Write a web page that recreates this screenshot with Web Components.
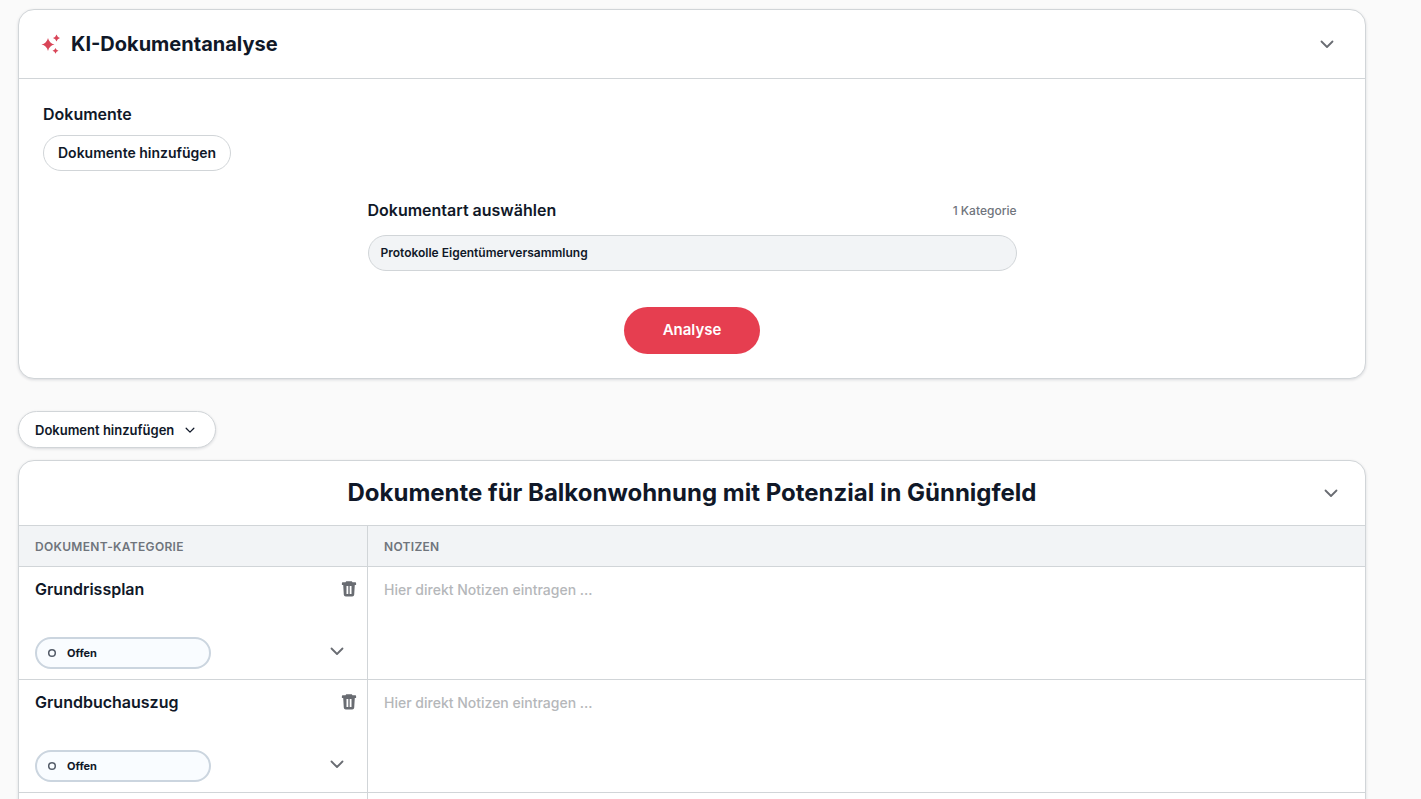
<!DOCTYPE html>
<html lang="de">
<head>
<meta charset="utf-8">
<meta name="viewport" content="width=device-width, initial-scale=1">
<title>Dokumente</title>
<style>
    :root {
        --text-primary: #101828;
        --text-muted: #6f747c;
        --placeholder: #b5b7ba;
        --border-color: #d1d5d8;
        --surface-muted: #f2f4f6;
        --accent-color: #e63e50;
    }
    * { box-sizing: border-box; }
    html, body { height: 100%; }
    body {
        margin: 0;
        overflow: hidden;
        background: #fafafa;
        color: var(--text-primary);
        font-family: Inter, "Liberation Sans", sans-serif;
    }
</style>
</head>
<body>
<documents-page></documents-page>

<script>
// Shared by all elements, shadow roots do not inherit these rules
const baseStyles = `
    *, *::before, *::after { box-sizing: border-box; }
    button { font: inherit; color: inherit; cursor: pointer; margin: 0; }
    h1, h2, h3 { margin: 0; }
`;

const icons = {
    sparkles: { box: '0 0 20 20', body: '<path fill="currentColor" d="M7 4 Q8.200 9.300 13.500 10.500 Q8.200 11.700 7 17 Q5.800 11.700 .5 10.500 Q5.800 9.300 7 4Z"/><path fill="currentColor" d="M15.500 .5 Q16.300 3.200 19 4 Q16.300 4.800 15.500 7.500 Q14.700 4.800 12 4 Q14.700 3.200 15.500 .5Z"/><path fill="currentColor" d="M14.500 14 Q15.100 16.200 17.500 16.800 Q15.100 17.400 14.500 19.800 Q13.900 17.400 11.500 16.800 Q13.900 16.200 14.500 14Z"/>' },
    chevron: { box: '0 0 20 20', body: '<path d="M4.500 7.500 L10 13 L15.500 7.500" fill="none" stroke="currentColor" stroke-width="1.800" stroke-linecap="round" stroke-linejoin="round"/>' },
    trash: { box: '0 0 16 16', body: '<path fill="currentColor" fill-rule="evenodd" d="M5.200 .3h5.600l.7 1H14.300a.8.8 0 0 1 .8.800v1.800h-1.300l-.6 9.800a2 2 0 0 1-2 1.800H4.800a2 2 0 0 1-2-1.800L2.200 3.900H.9V2.100a.8.800 0 0 1 .8-.8h2.800zM5.500 5v8h1.800V5zM8.700 5v8h1.800V5z"/>' },
    circle: { box: '0 0 10 10', body: '<circle cx="5" cy="5" r="3.300" fill="none" stroke="currentColor" stroke-width="1.500"/>' }
};

class UiIcon extends HTMLElement {
    connectedCallback() {
        const icon = icons[this.getAttribute('name')];
        this.attachShadow({ mode: 'open' }).innerHTML = `
            <style>
                :host { display: inline-flex; width: 20px; height: 20px; flex: none; }
                svg { width: 100%; height: 100%; }
            </style>
            <svg viewBox="${icon.box}" aria-hidden="true">${icon.body}</svg>
        `;
    }
}
customElements.define('ui-icon', UiIcon);

// Round-edged button: variants outline, raised and primary
class PillButton extends HTMLElement {
    connectedCallback() {
        this.attachShadow({ mode: 'open' }).innerHTML = `
            <style>
                ${baseStyles}
                :host { display: inline-flex; }
                button {
                    display: inline-flex;
                    align-items: center;
                    justify-content: center;
                    gap: 9px;
                    height: 36px;
                    padding: 0 14px 2px;
                    border: 1px solid var(--border-color);
                    border-radius: 24px;
                    background: #fff;
                    font-size: 14px;
                    font-weight: 600;
                    white-space: nowrap;
                }
                :host([variant="raised"]) button {
                    height: 37px;
                    padding: 0 16px;
                    font-size: 13px;
                    box-shadow: 0 1px 3px rgba(16, 24, 40, 0.14);
                }
                :host([variant="primary"]) button {
                    min-width: 136px;
                    height: 47px;
                    padding: 0 36px 2px;
                    border: 0;
                    background: var(--accent-color);
                    color: #fff;
                    font-size: 15px;
                }
            </style>
            <button type="button"><slot></slot></button>
        `;
    }
}
customElements.define('pill-button', PillButton);

class IconButton extends HTMLElement {
    connectedCallback() {
        this.attachShadow({ mode: 'open' }).innerHTML = `
            <style>
                ${baseStyles}
                :host { display: inline-flex; flex: none; }
                button {
                    display: inline-flex;
                    padding: 0;
                    border: 0;
                    background: none;
                    color: #696c72;
                }
                ui-icon[name="trash"] { width: 16px; height: 16px; }
            </style>
            <button type="button" aria-label="${this.getAttribute('label')}">
                <ui-icon name="${this.getAttribute('icon')}"></ui-icon>
            </button>
        `;
    }
}
customElements.define('icon-button', IconButton);

class PanelCard extends HTMLElement {
    connectedCallback() {
        this.attachShadow({ mode: 'open' }).innerHTML = `
            <style>
                ${baseStyles}
                :host {
                    display: block;
                    overflow: hidden;
                    background: #fff;
                    border: 1px solid var(--border-color);
                    border-radius: 16px;
                    box-shadow: 0 1px 3px rgba(16, 24, 40, 0.14);
                }
                header {
                    display: flex;
                    align-items: center;
                    justify-content: space-between;
                    min-height: 69px;
                    padding: 0 28px 0 22px;
                    border-bottom: 1px solid var(--border-color);
                }
                .title { display: flex; align-items: center; gap: 10px; }
                :host([centered]) header { min-height: 65px; padding: 0 24px; }
                :host([centered]) .title { flex: 1; justify-content: center; padding-left: 20px; }
            </style>
            <header>
                <div class="title"><slot name="title"></slot></div>
                <icon-button icon="chevron" label="Bereich einklappen"></icon-button>
            </header>
            <slot></slot>
        `;
    }
}
customElements.define('panel-card', PanelCard);

class DocumentAnalysis extends HTMLElement {
    connectedCallback() {
        this.attachShadow({ mode: 'open' }).innerHTML = `
            <style>
                ${baseStyles}
                :host { display: block; }
                h2 { font-size: 20px; line-height: 28px; font-weight: 700; }
                h3 { font-size: 16px; line-height: 22px; font-weight: 600; }
                .icon { color: #d94558; }
                .content { padding: 24px; }
                .documents { display: grid; justify-items: start; gap: 10px; }
                .types { max-width: 649px; margin: 28px auto 36px; }
                .types-header {
                    display: flex;
                    align-items: center;
                    justify-content: space-between;
                    margin-bottom: 14px;
                }
                .count { font-size: 12px; font-weight: 500; color: var(--text-muted); }
                .type {
                    display: block;
                    width: 100%;
                    height: 36px;
                    padding: 0 12px 2px;
                    border: 1px solid var(--border-color);
                    border-radius: 18px;
                    background: var(--surface-muted);
                    font-size: 12px;
                    font-weight: 600;
                    text-align: left;
                }
                .actions { display: flex; justify-content: center; }
            </style>
            <panel-card>
                <ui-icon slot="title" class="icon" name="sparkles"></ui-icon>
                <h2 slot="title">KI-Dokumentanalyse</h2>
                <div class="content">
                    <div class="documents">
                        <h3>Dokumente</h3>
                        <pill-button>Dokumente hinzufügen</pill-button>
                    </div>
                    <div class="types">
                        <div class="types-header">
                            <h3>Dokumentart auswählen</h3>
                            <span class="count">1 Kategorie</span>
                        </div>
                        <button class="type" type="button">Protokolle Eigentümerversammlung</button>
                    </div>
                    <div class="actions"><pill-button variant="primary">Analyse</pill-button></div>
                </div>
            </panel-card>
        `;
    }
}
customElements.define('document-analysis', DocumentAnalysis);

// Left cell of a row: name, delete, status and expand
class DocumentCategory extends HTMLElement {
    connectedCallback() {
        this.attachShadow({ mode: 'open' }).innerHTML = `
            <style>
                ${baseStyles}
                :host {
                    display: flex;
                    flex-direction: column;
                    justify-content: space-between;
                    height: 112px;
                    padding: 10px 10px 10px 16px;
                }
                .row { display: flex; align-items: center; justify-content: space-between; }
                h3 { font-size: 16px; line-height: 24px; font-weight: 600; }
                .status {
                    display: flex;
                    align-items: center;
                    gap: 10px;
                    width: 176px;
                    height: 32px;
                    padding: 0 10px;
                    border: 2px solid #cbd5df;
                    border-radius: 16px;
                    background: #f9fcff;
                    font-size: 11px;
                    font-weight: 700;
                }
                .status ui-icon { width: 10px; height: 10px; color: #535b68; }
                .expand { margin: 0 10px 4px 0; }
            </style>
            <div class="row">
                <h3><slot></slot></h3>
                <icon-button icon="trash" label="Löschen"></icon-button>
            </div>
            <div class="row">
                <button class="status" type="button"><ui-icon name="circle"></ui-icon>Offen</button>
                <icon-button class="expand" icon="chevron" label="Details anzeigen"></icon-button>
            </div>
        `;
    }
}
customElements.define('document-category', DocumentCategory);

class DocumentTable extends HTMLElement {
    set documents(names) {
        this._documents = names;
        this.render();
    }

    render() {
        if (!this.shadowRoot) this.attachShadow({ mode: 'open' });
        this.shadowRoot.innerHTML = `
            <style>
                ${baseStyles}
                :host { display: block; }
                table { width: 100%; border-collapse: separate; border-spacing: 0; table-layout: fixed; }
                th {
                    height: 41px;
                    padding: 0 16px;
                    background: var(--surface-muted);
                    border-bottom: 1px solid var(--border-color);
                    color: var(--text-muted);
                    font-size: 12px;
                    font-weight: 600;
                    letter-spacing: 0.3px;
                    text-align: left;
                    text-transform: uppercase;
                }
                td { height: 113px; padding: 0; border-bottom: 1px solid var(--border-color); vertical-align: top; }
                th:first-child, td:first-child { width: 349px; border-right: 1px solid var(--border-color); }
                textarea {
                    display: block;
                    width: 100%;
                    height: 112px;
                    padding: 12px 16px;
                    border: 0;
                    outline: 0;
                    resize: none;
                    background: none;
                    color: inherit;
                    font: 500 14px/22px Inter, "Liberation Sans", sans-serif;
                }
                textarea::placeholder { color: var(--placeholder); }
            </style>
            <table>
                <thead><tr><th>Dokument-Kategorie</th><th>Notizen</th></tr></thead>
                <tbody>
                    ${this._documents.map(name => `
                        <tr>
                            <td><document-category>${name}</document-category></td>
                            <td><textarea aria-label="Notizen zu ${name}" placeholder="Hier direkt Notizen eintragen …"></textarea></td>
                        </tr>
                    `).join('')}
                    <tr><td></td><td></td></tr>
                </tbody>
            </table>
        `;
    }
}
customElements.define('document-table', DocumentTable);

class DocumentsPage extends HTMLElement {
    connectedCallback() {
        this.attachShadow({ mode: 'open' }).innerHTML = `
            <style>
                ${baseStyles}
                :host { display: block; height: 100vh; overflow: hidden; padding: 9px 55px 0 18px; }
                .toolbar { display: flex; margin: 32px 0 12px; }
                .toolbar ui-icon { width: 14px; height: 14px; margin-right: 2px; }
                h1 { font-size: 24px; line-height: 32px; font-weight: 700; }
            </style>
            <document-analysis></document-analysis>
            <div class="toolbar">
                <pill-button variant="raised">Dokument hinzufügen <ui-icon name="chevron"></ui-icon></pill-button>
            </div>
            <panel-card centered>
                <h1 slot="title">Dokumente für Balkonwohnung mit Potenzial in Günnigfeld</h1>
                <document-table></document-table>
            </panel-card>
        `;
        this.shadowRoot.querySelector('document-table').documents = ['Grundrissplan', 'Grundbuchauszug'];
    }
}
customElements.define('documents-page', DocumentsPage);
</script>
</body>
</html>
